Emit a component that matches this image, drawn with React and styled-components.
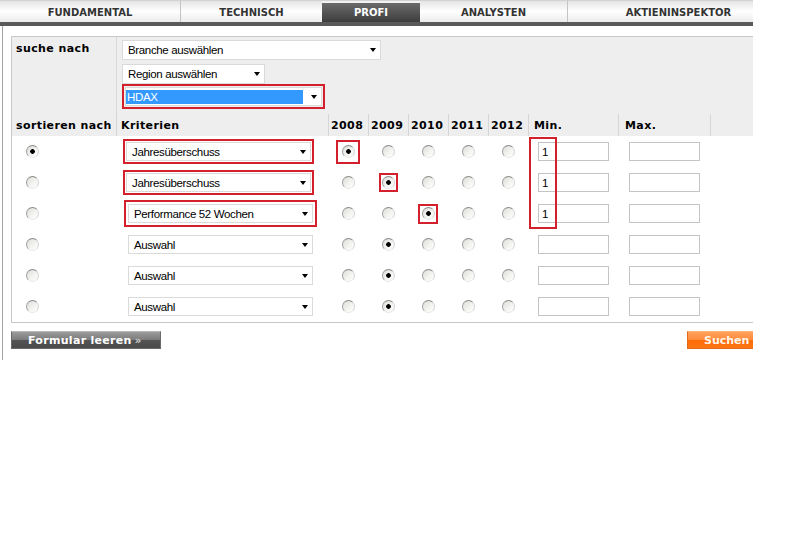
import React from 'react';
import styled, { createGlobalStyle } from 'styled-components';

const GlobalStyle = createGlobalStyle`
  html, body {
    margin: 0;
    padding: 0;
    background: #fff;
  }
  body {
    font-family: "DejaVu Sans", Verdana, sans-serif;
  }
`;

const COLS = '104px 212px 40px 40px 40px 40px 40px 90px 92px 1fr';
const RED = '#d3202c';

const tabs = [
  { label: 'FUNDAMENTAL', width: 180 },
  { label: 'TECHNISCH', width: 142, divider: true },
  { label: 'PROFI', width: 98, active: true },
  { label: 'ANALYSTEN', width: 147 },
  { label: 'AKTIENINSPEKTOR', width: 222, divider: true },
];

const years = ['2008', '2009', '2010', '2011', '2012'];

const rows = [
  { sort: true, label: 'Jahresüberschuss', year: 0, min: '1', shift: 10, selectMark: 1, yearMark: 3.5 },
  { label: 'Jahresüberschuss', year: 1, min: '1', shift: 10, selectMark: 1, yearMark: 1 },
  { label: 'Performance 52 Wochen', year: 2, min: '1', shift: 12, selectMark: 2, yearMark: 1.5 },
  { label: 'Auswahl', year: 1, shift: 12 },
  { label: 'Auswahl', year: 1, shift: 12 },
  { label: 'Auswahl', year: 1, shift: 12 },
];

function YearRadio({ name, checked, mark }) {
  const radio = <Radio name={name} defaultChecked={checked} />;
  if (mark == null) return radio;
  return <RadioMark $pad={mark}>{radio}</RadioMark>;
}

function App() {
  return (
    <Page>
      <GlobalStyle />
      <Inner>
        <TabBar>
          {tabs.map((tab) => (
            <Tab key={tab.label} $width={tab.width} $active={tab.active} $divider={tab.divider}>
              {tab.label}
            </Tab>
          ))}
        </TabBar>
        <Wrapper>
          <Panel>
            <SearchSection>
              <SearchLabel>suche nach</SearchLabel>
              <SearchFields>
                <SelectBox $w={259}>
                  Branche auswählen
                  <Arrow />
                </SelectBox>
                <SelectBox $w={143}>
                  Region auswählen
                  <Arrow />
                </SelectBox>
                <SelectBox $w={197} $h={19} $shift={3} $mark={1} $pad={0}>
                  <Highlight>HDAX</Highlight>
                  <Arrow />
                </SelectBox>
              </SearchFields>
            </SearchSection>

            <HeaderRow>
              <HeaderCell>sortieren nach</HeaderCell>
              <HeaderCell $sep>Kriterien</HeaderCell>
              {years.map((y) => (
                <HeaderCell key={y} $sep $pad={2}>
                  {y}
                </HeaderCell>
              ))}
              <HeaderCell $sep $pad={5}>Min.</HeaderCell>
              <HeaderCell $sep $pad={6}>Max.</HeaderCell>
              <HeaderCell $sep />
            </HeaderRow>

            <Rows>
              {rows.map((row, i) => (
                <Row key={i}>
                  <SortCell>
                    <Radio name="sort" defaultChecked={!!row.sort} />
                  </SortCell>
                  <Cell>
                    <SelectBox $w={185} $h={19} $shift={row.shift} $mark={row.selectMark}>
                      {row.label}
                      <Arrow />
                    </SelectBox>
                  </Cell>
                  {years.map((y, yi) => (
                    <YearCell key={y}>
                      <YearRadio
                        name={`year-${i}`}
                        checked={row.year === yi}
                        mark={row.year === yi ? row.yearMark : undefined}
                      />
                    </YearCell>
                  ))}
                  <Cell>
                    <TextInput $shift={10} defaultValue={row.min || ''} />
                  </Cell>
                  <Cell>
                    <TextInput $shift={11} defaultValue="" />
                  </Cell>
                  <Cell />
                </Row>
              ))}
              <MinMark />
            </Rows>
          </Panel>

          <ButtonRow>
            <GreyButton>
              Formular leeren <Chevron>»</Chevron>
            </GreyButton>
            <OrangeButton>Suchen</OrangeButton>
          </ButtonRow>
        </Wrapper>
      </Inner>
    </Page>
  );
}

const Page = styled.div`
  width: 753px;
  overflow: hidden;
`;

const Inner = styled.div`
  width: 789px;
`;

const TabBar = styled.div`
  display: flex;
  height: 22px;
  border-bottom: 4px solid #5a5a5a;
`;

const Tab = styled.div`
  box-sizing: border-box;
  flex: none;
  width: ${(p) => p.$width}px;
  display: flex;
  align-items: center;
  justify-content: center;
  padding-top: 1px;
  font-size: 10px;
  font-weight: bold;
  color: ${(p) => (p.$active ? '#fff' : '#333')};
  border-left: ${(p) => (p.$divider ? '1px solid #c4c4c4' : 'none')};
  border-top: 1px solid #d2d2d2;
  background: ${(p) =>
    p.$active
      ? 'linear-gradient(#f2f2f2 0, #f2f2f2 2px, #6b6b6b 2px, #3d3d3d 100%)'
      : 'linear-gradient(#e4e4e4 0%, #f7f7f7 35%, #ffffff 50%, #ebebeb 100%)'};
`;

const Wrapper = styled.div`
  width: 766px;
  margin-left: 2px;
  border-left: 1px solid #a3a3a3;
  padding: 10px 0 11px 8px;
`;

const Panel = styled.div`
  border: 1px solid #c8c8c8;
  border-right: none;
`;

const SearchSection = styled.div`
  display: grid;
  grid-template-columns: 104px 1fr;
  background: #eeeeee;
  height: 77px;
`;

const SearchLabel = styled.div`
  padding: 5px 0 0 4px;
  font-size: 11px;
  font-weight: bold;
  letter-spacing: 0.4px;
  color: #000;
`;

const SearchFields = styled.div`
  border-left: 1px solid #d8d8d8;
  display: flex;
  flex-direction: column;
  align-items: flex-start;
  gap: 4px;
  padding: 3px 0 0 5px;
  & > :last-child {
    margin-top: -1px;
  }
`;

const SelectBox = styled.div`
  box-sizing: border-box;
  display: flex;
  align-items: center;
  width: ${(p) => p.$w}px;
  height: ${(p) => p.$h || 20}px;
  margin-left: ${(p) => p.$shift || 0}px;
  padding-left: ${(p) => (p.$pad != null ? p.$pad : 5)}px;
  background: #fff;
  border: 1px solid #dadada;
  font-family: "Liberation Sans", Arial, sans-serif;
  font-size: 11.5px;
  letter-spacing: -0.35px;
  color: #000;
  white-space: nowrap;
  outline: ${(p) => (p.$mark != null ? `2px solid ${RED}` : 'none')};
  outline-offset: ${(p) => p.$mark || 0}px;
`;

const Highlight = styled.span`
  display: flex;
  align-items: center;
  width: 176px;
  height: 14px;
  padding-left: 1px;
  background: #3399ff;
  color: #fff;
`;

const Arrow = styled.span`
  flex: none;
  margin-left: auto;
  margin-right: 4px;
  width: 0;
  height: 0;
  border-left: 3.5px solid transparent;
  border-right: 3.5px solid transparent;
  border-top: 4px solid #000;
`;

const HeaderRow = styled.div`
  display: grid;
  grid-template-columns: ${COLS};
  height: 22px;
  background: #eeeeee;
`;

const HeaderCell = styled.div`
  display: flex;
  align-items: center;
  padding-left: ${(p) => (p.$pad != null ? p.$pad : 4)}px;
  border-left: ${(p) => (p.$sep ? '1px solid #d6d6d6' : 'none')};
  font-size: 11px;
  font-weight: bold;
  letter-spacing: 0.4px;
  color: #000;
  white-space: nowrap;
`;

const Rows = styled.div`
  position: relative;
  background: #fff;
`;

const Row = styled.div`
  display: grid;
  grid-template-columns: ${COLS};
  height: 31px;
  align-items: center;
`;

const Cell = styled.div`
  display: flex;
  align-items: center;
`;

const SortCell = styled(Cell)`
  padding-left: 14px;
`;

const YearCell = styled(Cell)`
  justify-content: center;
`;

const Radio = styled.input.attrs({ type: 'radio' })`
  appearance: none;
  box-sizing: border-box;
  margin: 0;
  width: 13px;
  height: 13px;
  border-radius: 50%;
  border: 1px solid;
  border-color: #8c8c8c #d4d4d4 #e8e8e8 #9e9e9e;
  background: linear-gradient(135deg, #dcdcd6 0%, #f3f3f1 55%, #ffffff 100%);
  &:checked {
    background: radial-gradient(circle, #000 0, #000 2px, transparent 2.6px),
      linear-gradient(135deg, #dcdcd6 0%, #f3f3f1 55%, #ffffff 100%);
  }
`;

const RadioMark = styled.span`
  display: inline-flex;
  padding: ${(p) => p.$pad}px;
  border: 2px solid ${RED};
`;

const TextInput = styled.input.attrs({ type: 'text', readOnly: true })`
  box-sizing: border-box;
  width: 71px;
  height: 19px;
  margin: 0 0 0 ${(p) => p.$shift}px;
  padding: 0 3px;
  border: 1px solid #c4c4c4;
  background: #fff;
  font-family: "Liberation Sans", Arial, sans-serif;
  font-size: 11.5px;
  color: #000;
  outline: none;
`;

const MinMark = styled.div`
  position: absolute;
  top: 1px;
  left: 517px;
  width: 28px;
  height: 92px;
  box-sizing: border-box;
  border: 2px solid ${RED};
  pointer-events: none;
`;

const ButtonRow = styled.div`
  display: flex;
  justify-content: space-between;
  margin-top: 8px;
`;

const buttonBase = `
  box-sizing: border-box;
  height: 18px;
  margin: 0;
  display: flex;
  align-items: center;
  font-family: "DejaVu Sans", Verdana, sans-serif;
  font-size: 11px;
  font-weight: bold;
  cursor: pointer;
`;

const GreyButton = styled.button`
  ${buttonBase}
  width: 150px;
  padding: 0 0 0 16px;
  letter-spacing: 0.3px;
  color: #fff;
  border: 1px solid #6a6a6a;
  border-top-color: #b8b8b8;
  background: linear-gradient(#9b9b9b 0%, #7c7c7c 48%, #545454 52%, #4a4a4a 100%);
`;

const Chevron = styled.span`
  font-weight: normal;
  margin-left: 3px;
  color: #e8e8e8;
`;

const OrangeButton = styled.button`
  ${buttonBase}
  width: 80px;
  margin-right: 10px;
  padding: 0 0 0 16px;
  color: #fff6e8;
  border: 1px solid #e06a18;
  border-top-color: #ffb37a;
  background: linear-gradient(#ffa25e 0%, #ff8c3c 48%, #ff6c0a 52%, #ff7414 100%);
`;

export default App;
